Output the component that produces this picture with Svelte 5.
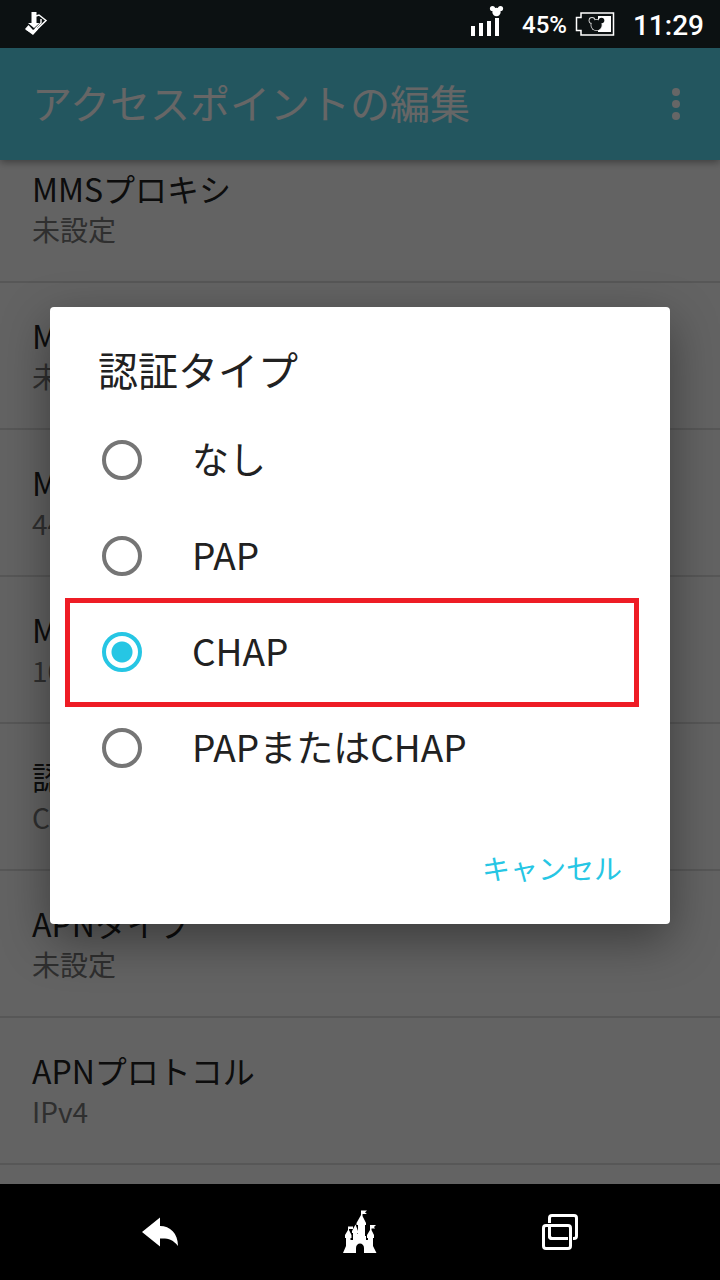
<script>
    const settings = [
        { title: "MMSプロキシ", value: "未設定" },
        { title: "MMSポート", value: "未設定" },
        { title: "MCC", value: "440" },
        { title: "MNC", value: "10" },
        { title: "認証タイプ", value: "CHAP" },
        { title: "APNタイプ", value: "未設定" },
        { title: "APNプロトコル", value: "IPv4" }
    ];

    const authTypes = ["なし", "PAP", "CHAP", "PAPまたはCHAP"];

    let selected = "CHAP";
    let open = true;
    const closeDialog = () => open = false;
</script>

<div class="screen">
    <div class="status-bar">
        <svg width="24" height="26" viewBox="0 0 24 26">
            <path d="M12 5 L15 4 L22 9.500 L9 22 L2 18" fill="none" stroke="#fff" stroke-width="1.500" />
            <path d="M1 18 L4.500 14 L9 19 L13 16.500 L14 18.500 L9 24 Z" fill="#fff" />
            <path d="M7.500 1 H12.500 V12 H15.500 L10 17 L4 12 H7.500 Z" fill="#fff" />
            <path d="M11 18 L17 12 V8" fill="none" stroke="#fff" stroke-width="1.400" />
        </svg>
        <div class="status-right">
            <svg class="signal" width="34" height="32" viewBox="0 0 34 32">
                <path d="M1 22h4v10H1z M9 19h4v13H9z M17 17h4v15h-4z M25 14h4v18h-4z" fill="#fff" />
                <circle cx="26.500" cy="8" r="4.200" fill="#fff" />
                <circle cx="22.500" cy="4.500" r="2.600" fill="#fff" />
                <circle cx="30.500" cy="4.500" r="2.600" fill="#fff" />
            </svg>
            <span class="percent">45%</span>
            <svg class="battery" width="40" height="24" viewBox="0 0 40 24">
                <path d="M6 1 H38.500 V23 H6 V18.500 H1.500 V5.500 H6 Z" fill="none" stroke="#fff" stroke-width="1.500" />
                <path d="M23 4 H36 V20 H23 Z" fill="#fff" />
                <g fill="#ddd">
                    <circle cx="17" cy="8.500" r="3.400" />
                    <circle cx="21.500" cy="13" r="6" />
                </g>
                <g fill="#0c1112">
                    <circle cx="17" cy="8.500" r="2.500" />
                    <circle cx="26.500" cy="8.500" r="2.800" />
                    <circle cx="21.500" cy="13" r="5.200" />
                </g>
            </svg>
            <span class="time">11:29</span>
        </div>
    </div>

    <main>
        <header class="app-bar">
            <h1>アクセスポイントの編集</h1>
            <button class="menu-btn" aria-label="メニュー">
                <svg width="8" height="32" viewBox="0 0 8 32" fill="#fff">
                    <circle cx="4" cy="4" r="4" />
                    <circle cx="4" cy="16" r="4" />
                    <circle cx="4" cy="28" r="4" />
                </svg>
            </button>
        </header>

        <ul class="settings">
            {#each settings as item}
                <li>
                    <span class="item-title">{item.title}</span>
                    <span class="item-value">{item.value}</span>
                </li>
            {/each}
        </ul>

        {#if open}
            <div class="overlay">
                <div class="dialog" role="dialog" aria-labelledby="dialog-title">
                    <h2 id="dialog-title">認証タイプ</h2>
                    {#each authTypes as type}
                        <label class="option" class:marked={type === "CHAP"}>
                            <input type="radio" name="auth" value={type} bind:group={selected} />
                            <span>{type}</span>
                        </label>
                    {/each}
                    <div class="actions">
                        <button class="cancel-btn" on:click={closeDialog}>キャンセル</button>
                    </div>
                </div>
            </div>
        {/if}
    </main>

    <nav class="nav-bar">
        <button aria-label="戻る">
            <svg width="48" height="48" viewBox="0 0 48 48">
                <path d="M6 24 L24 9.500 V18 C34 18 42 25 42 38 C37 31 31 30 24 30.500 V38.500 Z" fill="#fff" />
            </svg>
        </button>
        <button aria-label="ホーム">
            <svg width="48" height="48" viewBox="0 0 48 48">
                <path
                    d="M7 45 L10 38 V30 H9 V27 L12 22 V18.500 H17 V21 H13 V22 L15.500 27 V30 H14.500 V32 H17 V25 H16 V23 L19.500 16.500 L22 23 V25 H21.500 V26 H22 V17 H20.500 V15 L25 7 V2.500 H31 L29 4.500 L31 6 H26.500 V8 L30 15 V17 H29 V28 H30 V32 H32 V30 H31 V27 L34 22 V17 H40 L38 19 L39 20.500 H35.500 V22 L38 27 V30 H37 V38 L40.500 45 H28 V40 C28 34 20 34 20 40 V45 Z"
                    fill="#fff"
                />
            </svg>
        </button>
        <button aria-label="履歴">
            <svg width="48" height="48" viewBox="0 0 48 48" fill="none" stroke="#fff" stroke-width="3">
                <rect x="13.500" y="7.500" width="27" height="23" rx="2.500" />
                <rect x="7.500" y="17.500" width="27" height="23" rx="2.500" stroke="#000" stroke-width="5" />
                <path d="M13.500 18 V28 Q13.500 30.500 16 30.500 H31" />
                <rect x="7.500" y="17.500" width="27" height="23" rx="2.500" />
            </svg>
        </button>
    </nav>
</div>

<style>
    :global(body) { margin: 0; background: #000; }
    .screen { display: flex; flex-direction: column; height: 100vh; overflow: hidden; font-family: "Noto Sans CJK JP", sans-serif; color: #212121; }
    button { border: none; background: none; padding: 0; font-family: inherit; cursor: pointer; }
    svg { display: block; }

    .status-bar { flex: none; display: flex; align-items: center; justify-content: space-between; height: 48px; padding: 0 16px 0 24px; background: #0c1112; color: #fff; font-family: Roboto, sans-serif; font-weight: 500; }
    .status-right { display: flex; align-items: center; height: 48px; }
    .signal { margin: 0 18px 8px 0; }
    .percent { font-size: 24px; padding-top: 2px; margin-right: 8px; }
    .battery { margin-right: 18px; }
    .time { font-size: 28px; padding-top: 2px; }

    main { position: relative; flex: 1; min-height: 0; display: flex; flex-direction: column; overflow: hidden; background: #f8f8f8; }
    .app-bar { flex: none; z-index: 1; display: flex; align-items: center; justify-content: space-between; height: 112px; padding: 0 32px; background: #58d7ee; box-shadow: 0 2px 8px rgba(0, 0, 0, 0.4); }
    h1 { margin: 0; padding-bottom: 4px; font-size: 40px; font-weight: 400; line-height: 48px; color: #fff; }
    .menu-btn { padding: 8px; }

    .settings { list-style: none; margin: -24px 0 0; padding: 0; }
    .settings li { display: flex; flex-direction: column; padding: 30px 32px 33px; border-bottom: 2px solid #dadada; }
    .item-title { font-size: 32px; line-height: 44px; }
    .item-value { font-size: 28px; line-height: 38px; color: #757575; }

    .overlay { position: absolute; inset: 0; z-index: 2; display: flex; align-items: center; justify-content: center; padding: 0 50px 2px; background: rgba(0, 0, 0, 0.6); }
    .dialog { flex: 1; background: #fff; border-radius: 4px; box-shadow: 0 16px 48px rgba(0, 0, 0, 0.4); }
    h2 { margin: 0; padding: 34px 48px 15px; font-size: 40px; font-weight: 400; line-height: 56px; }
    .option { position: relative; display: flex; align-items: center; gap: 50px; height: 96px; padding: 0 52px; font-size: 37px; cursor: pointer; }
    .option span { padding-bottom: 4px; }
    .option input { appearance: none; flex: none; width: 40px; height: 40px; margin: 0; border: 4px solid #757575; border-radius: 50%; }
    .option input:checked { border-color: #26c6e4; background: radial-gradient(circle, #26c6e4 10px, transparent 11px); }
    .marked::after { content: ""; position: absolute; inset: -6px 31px -7px 15px; border: 5px solid #ee1c25; pointer-events: none; }
    .actions { display: flex; justify-content: flex-end; padding: 36px 48px 20px; }
    .cancel-btn { height: 72px; font-size: 28px; color: #26c6e4; }

    .nav-bar { flex: none; display: grid; grid-template-columns: repeat(3, 1fr); height: 96px; padding: 0 60px; background: #000; }
    .nav-bar button { display: flex; align-items: center; justify-content: center; }
</style>
